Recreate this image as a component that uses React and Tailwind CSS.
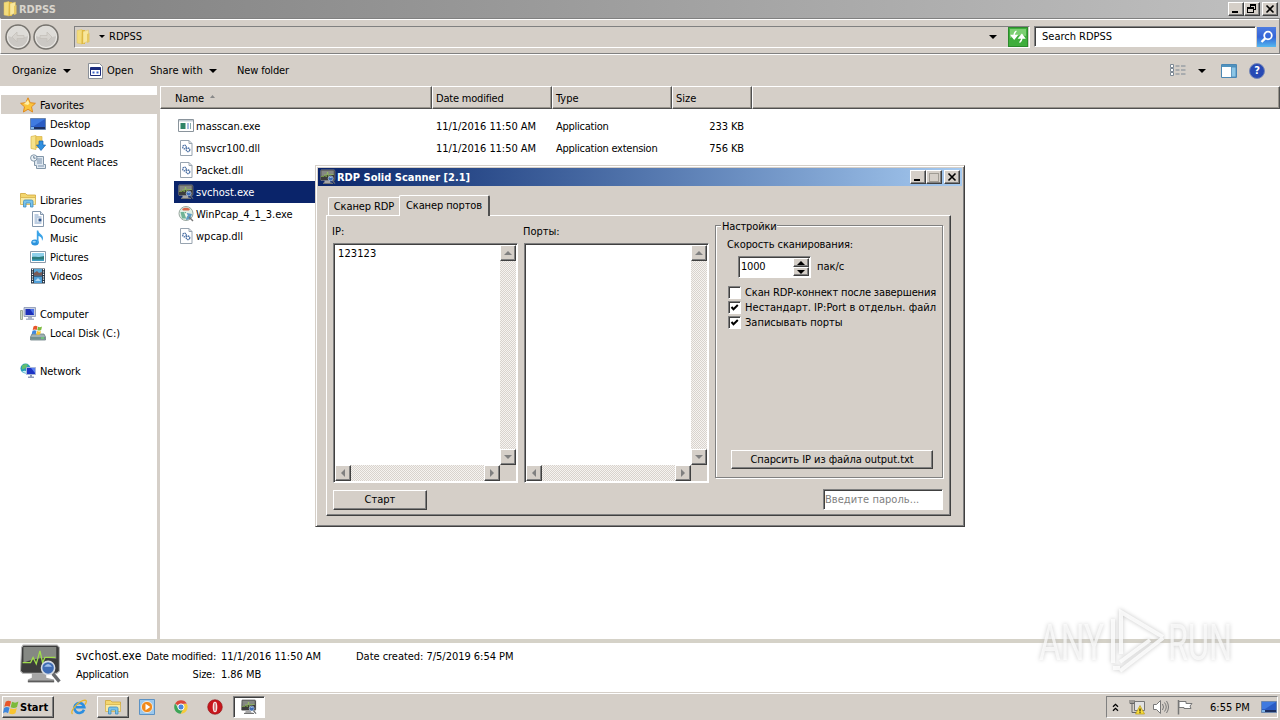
import React, { useState } from 'react';
import clsx from 'clsx';

const raised = 'bg-[#d5cfc8] border border-t-white border-l-white border-r-[#404040] border-b-[#404040] shadow-[inset_-1px_-1px_0_#808080]';
const sunken = 'border border-t-[#808080] border-l-[#808080] border-r-white border-b-white shadow-[inset_1px_1px_0_#404040]';

/* ---------- icons ---------- */

const Svg = ({ size = 16, className, children }) => (
  <svg width={size} height={size} viewBox="0 0 16 16" fill="none" className={clsx('shrink-0', className)}>
    {children}
  </svg>
);

const Caret = ({ className }) => (
  <svg width="8" height="4" viewBox="0 0 8 4" className={clsx('shrink-0', className)}>
    <path d="M0 0h8L4 4z" fill="#000" />
  </svg>
);

const FolderIcon = ({ size }) => (
  <Svg size={size}>
    <path d="M2 1.500l5-1v14.500l-5-1z" fill="#f3dc7c" stroke="#e0c25c" strokeWidth=".5" />
    <path d="M7 1h3v14H6.500z" fill="#dfb840" />
    <path d="M8 2.500l5.500-1.500v11l-5.500 2.500z" fill="#f8e79c" stroke="#dcbc54" strokeWidth=".4" />
    <path d="M12 5l2.500-1v9l-2.500 1z" fill="#e6c862" />
  </Svg>
);

const StarIcon = () => (
  <Svg>
    <path d="M8 .8l2.200 4.900 5.200.6-3.900 3.500 1.100 5.200L8 12.300 3.400 15l1.100-5.200L.6 6.300l5.200-.6z" fill="#fbc53c" stroke="#e08a1e" />
    <path d="M8 3l1.400 3.400L8 8 4 7z" fill="#fff0a8" />
  </Svg>
);

const DesktopIcon = () => (
  <Svg>
    <path d="M.5 2.500h15v11H.5z" fill="#2a5cc4" stroke="#6c87ad" />
    <path d="M1 3h14L4 10H1z" fill="#3f7ae0" />
    <path d="M1 11h14v2H1z" fill="#1c2f5f" />
    <path d="M1 11h3v2H1z" fill="#7fb4e8" />
  </Svg>
);

const DownloadsIcon = () => (
  <Svg>
    <path d="M1 1.500l5-1v14l-5-1z" fill="#f6e28a" stroke="#d8b548" strokeWidth=".7" />
    <path d="M6 1.500h6v11H6z" fill="#f0cf61" stroke="#d8b548" strokeWidth=".7" />
    <path d="M9 6h4v4h2.600L11 15.500 6.500 10H9z" fill="#2f8fe0" stroke="#1763ac" strokeWidth=".7" />
  </Svg>
);

const RecentIcon = () => (
  <Svg>
    <path d="M4.500 2.500h9v8h2v4h-9v-3h-2z" fill="#dfe8f0" stroke="#8296a8" />
    <path d="M7 5h5M7 7h5M7 9h5M8 12h6" stroke="#7089a4" strokeWidth=".9" />
    <circle cx="3.800" cy="4" r="3.200" fill="#eef4f8" stroke="#8296a8" />
    <path d="M3.800 2v2.200h1.800" stroke="#45607a" strokeWidth=".8" />
  </Svg>
);

const LibrariesIcon = () => (
  <Svg>
    <path d="M.5 3V1.500h5L7 3h8.500v4H.5z" fill="#f3d66e" stroke="#cfa63a" strokeWidth=".8" />
    <path d="M.5 5.500h15v7H.5z" fill="#f9eaa4" stroke="#d5b24b" strokeWidth=".8" />
    <path d="M3.500 15V9.500q0-1.500 1.500-1.500h6.500q1.500 0 1.500 1.500V15h-2.500v-4h-4.500v4z" fill="#79c3ea" stroke="#3f8cc0" strokeWidth=".8" />
  </Svg>
);

const DocumentIcon = () => (
  <Svg>
    <path d="M2.500.5h8l3 3v12h-11z" fill="#fff" stroke="#8497ac" />
    <path d="M10.500.5v3h3" fill="#dce6f0" stroke="#8497ac" />
    <path d="M4.500 4h4M4.500 6h7M4.500 8h3M4.500 10h3M4.500 12h7" stroke="#7b9cc4" />
    <path d="M8.500 7.500h3v3h-3z" fill="#31568c" />
  </Svg>
);

const MusicIcon = () => (
  <Svg>
    <ellipse cx="5" cy="12.500" rx="3.800" ry="2.900" fill="#2b92dc" />
    <path d="M6.800 13V.5h1.500c.6 3.500 4.700 3.800 4.700 7.500 0 1.200-.4 2-1 2.800.2-3-1.600-4.300-3.500-4.800V13z" fill="#3ba4e8" />
    <ellipse cx="4.200" cy="11.800" rx="1.700" ry="1" fill="#9cd6f8" />
  </Svg>
);

const PicturesIcon = () => (
  <Svg>
    <path d="M.5 2.500h15v11H.5z" fill="#fff" stroke="#8b9aaa" />
    <path d="M2 4h12v8H2z" fill="#8fd0ea" />
    <path d="M2 8c3-1 5 1 12-1v5H2z" fill="#2c7c7c" />
    <path d="M2 10.500h12V12H2z" fill="#3f9fc4" />
  </Svg>
);

const VideosIcon = () => (
  <Svg>
    <path d="M1 .5h14v15H1z" fill="#263646" />
    <path d="M4 1h8v6.500H4z" fill="#5aa6d6" />
    <path d="M4 8.500h8V15H4z" fill="#4f9fd8" />
    <path d="M4 5l3-2 2 2 3-1v3.500H4z" fill="#7a5a56" />
    <path d="M5 13l3-3 3 3z" fill="#b6dcf4" />
    <path d="M2.500 1v14M13.500 1v14" stroke="#fff" strokeWidth="1.200" strokeDasharray="1.200 1.200" />
  </Svg>
);

const ComputerIcon = () => (
  <Svg>
    <path d="M.5 4.500h2v9h-2z" fill="#cfd9c4" stroke="#8c9a86" strokeWidth=".8" />
    <path d="M4 1.500h11.500v9H4z" fill="#c7cfe0" stroke="#8592b0" strokeWidth=".8" />
    <path d="M5.500 3H14v6H5.500z" fill="#1c2fb8" />
    <path d="M10 3h4v6z" fill="#4a6fe8" />
    <path d="M8 11h4v1.500h2V14H6v-1.500h2z" fill="#aab4c8" />
  </Svg>
);

const WinFlag = ({ size }) => (
  <Svg size={size}>
    <path d="M2.500 2.500C4.500 1 6 1.500 7.600 2.300L6.300 7.300C4.600 6.300 3 6.300 1.200 7.400z" fill="#e8562a" />
    <path d="M8.500 2.700c2 1 4 1 6-.3L13.200 7.500c-2 1.200-4 1.100-6 .2z" fill="#7cba3c" />
    <path d="M1 8.400c2-1.200 3.500-1 5.100-.1L4.800 13.300C3.200 12.300 1.500 12.300 0 13.300z" fill="#3d86dc" />
    <path d="M7 8.700c2 1 4 1 6-.2l-1.300 5c-2 1.200-4 1.100-6 .2z" fill="#f8c431" />
  </Svg>
);

const DiskIcon = () => (
  <Svg>
    <path d="M2 9h12l1.500 3v3H.5v-3z" fill="#9fb0b4" stroke="#6b7f84" strokeWidth=".8" />
    <path d="M1 12h14v2.500H1z" fill="#73908f" />
    <path d="M11 13h3" stroke="#6ff06a" />
    <path d="M3.500 1.500q2-1.500 4 0l-.8 3.500q-2-1-4 0z" fill="#e8562a" />
    <path d="M8 1.800q2 1 4-.2L11.200 5q-2 1-4 .2z" fill="#7cba3c" />
    <path d="M2.500 5.800q2-1 4 0l-.8 3.400q-2-1-4 0z" fill="#3d86dc" />
    <path d="M7 6q2 1 4-.1l-.8 3.400q-2 1-4 .1z" fill="#f8c431" />
  </Svg>
);

const NetworkIcon = () => (
  <Svg>
    <circle cx="5.500" cy="5.500" r="5" fill="#2a9cb8" />
    <path d="M2 2.500Q5 0 8 1.500L6 5 2 6.500z" fill="#63c06c" />
    <path d="M2 9q2-2 4-1v2z" fill="#c7eef4" />
    <path d="M6.500 4.500h9v7h-9z" fill="#1d33c4" stroke="#a9b6d8" />
    <path d="M11 5h4v5z" fill="#5a80f0" />
    <path d="M10 12h2v1.500h2V15H8v-1.500h2z" fill="#8e9bb8" />
  </Svg>
);

const ExeIcon = () => (
  <Svg>
    <path d="M.5 1.500h15v12H.5z" fill="#fff" stroke="#8a949c" />
    <path d="M1 2h14v1.500H1z" fill="#c2ccd4" />
    <path d="M2.500 5h5v6h-5z" fill="#2f8468" />
    <path d="M9 6h2M9 8h2M9 10h2" stroke="#4a7ac0" />
    <path d="M12.500 5v6" stroke="#8aa" />
  </Svg>
);

const DllIcon = () => (
  <Svg>
    <path d="M2.500.5h8.500l3 3v12H2.500z" fill="#fff" stroke="#98a4b0" />
    <path d="M11 .5v3h3" stroke="#98a4b0" />
    <circle cx="6.500" cy="7" r="1.800" stroke="#4a6fa4" strokeWidth="1.300" strokeDasharray="1.400 .5" />
    <circle cx="10" cy="9.800" r="1.800" stroke="#4a6fa4" strokeWidth="1.300" strokeDasharray="1.400 .5" />
  </Svg>
);

const InstallerIcon = () => (
  <Svg>
    <circle cx="8" cy="7.500" r="7" fill="#dfeee4" stroke="#9aa8a0" />
    <path d="M4 3Q8 .5 12 3L11 4.500H5z" fill="#d8684c" />
    <path d="M2.500 6H8v6.500H4z" fill="#6fb396" />
    <path d="M9 7l5 1-2 5-4 1z" fill="#5f9cc4" />
    <path d="M6 6l4 3-2 3z" fill="#f4faf0" />
    <path d="M11 11l4 4" stroke="#777" strokeWidth="1.500" />
  </Svg>
);

const ScannerIcon = ({ size }) => (
  <Svg size={size}>
    <path d="M1.200 .8h12.900l.9.9v9l-.9.800H1l-.8-.8.4-9z" fill="#3c3c3c" stroke="#b4b4b4" strokeWidth=".4" />
    <path d="M1.300 1.500h12.500v4.500Q7 5 1.300 7.500z" fill="#858883" />
    <path d="M1 7.500h3l1-2 1.200 2.500L7.600 3l1 4.500L9.500 5.500h4" stroke="#9fdc4c" strokeWidth=".5" />
    <path d="M4.500 11.500h5.500v1.700l3 .7v1H3v-1l1.500-.7z" fill="#a6a6a6" />
    <path d="M3 14.300h10v.7H3z" fill="#5c5c5c" />
    <circle cx="10.700" cy="9.500" r="2.500" fill="#3f6cb4" stroke="#d5dbe4" strokeWidth=".6" />
    <path d="M9.200 9q1.500-2 3 0z" fill="#9fc0ec" />
    <path d="M12.500 11.700l2.500 3" stroke="#66686b" strokeWidth="1.300" />
  </Svg>
);

const OpenIcon = () => (
  <Svg>
    <path d="M.5.5h11l3 3v12h-14z" fill="#fff" stroke="#8a9098" />
    <path d="M2.500 4.500h10v8h-10z" fill="#fff" stroke="#1b2c7c" />
    <path d="M2.500 4.500h10V7h-10z" fill="#1b2c7c" />
    <path d="M4.500 8.500h2v2h-2zM8.500 8.500h2v2h-2z" fill="#3a62c8" />
  </Svg>
);

const IeIcon = () => (
  <Svg>
    <path d="M13 10.800A5 5 0 1 1 13.300 8.300H5" stroke="#2b8ee0" strokeWidth="2.600" />
    <path d="M1.500 15C-1.500 12 8 1.500 14 1.200c2.300 0 1 3 0 4.300" stroke="#e8b62c" strokeWidth="1.300" />
  </Svg>
);

const MediaIcon = () => (
  <Svg>
    <path d="M.5.5h15v15H.5z" fill="#9cc8ec" stroke="#5c92c4" />
    <circle cx="8" cy="8" r="5.600" fill="#f08a1c" stroke="#fff" strokeWidth=".7" />
    <path d="M6.500 4.800L11.300 8l-4.800 3.200z" fill="#fff" />
  </Svg>
);

const ChromeIcon = () => (
  <Svg>
    <path d="M8 8L2.100 4.600A6.800 6.800 0 0 1 13.900 4.600L8 5z" fill="#dc4638" />
    <path d="M8 5h5.900A6.800 6.800 0 0 1 7.600 14.800L10.600 9.500z" fill="#f6cb3c" />
    <path d="M2.100 4.600A6.800 6.800 0 0 0 7.600 14.800L10.200 10 5.400 9.500z" fill="#3da557" />
    <circle cx="8" cy="8" r="3.100" fill="#4a86dc" stroke="#fff" />
  </Svg>
);

const OperaIcon = () => (
  <Svg>
    <circle cx="8" cy="8" r="7.300" fill="#c8161c" stroke="#8c1014" strokeWidth=".6" />
    <ellipse cx="8" cy="8" rx="2.300" ry="5.300" fill="#f6e8e4" />
    <ellipse cx="8" cy="8" rx=".8" ry="4.300" fill="#c8686a" />
  </Svg>
);

/* ---------- window buttons ---------- */

const WinButton = ({ kind }) => (
  <div className={clsx('flex h-[14px] w-[16px] items-center justify-center', raised)}>
    <svg width="12" height="10" viewBox="0 0 12 10" fill="none" shapeRendering="crispEdges">
      {kind === 'min' && <path d="M2 8h6" stroke="#000" strokeWidth="2" />}
      {kind === 'max' && <path d="M1.500 1v8h9V1zM1 1.500h10" stroke="#a09c94" />}
      {kind === 'restore' && <path d="M4.500 3V.5h5v5H8M4 1h6M1.500 3.500h6v5h-6zM1 4h7" stroke="#000" />}
      {kind === 'close' && <path d="M2.500 1.500l7 7M9.500 1.500l-7 7" stroke="#000" strokeWidth="1.600" shapeRendering="auto" />}
    </svg>
  </div>
);

/* ---------- explorer ---------- */

const navItems = [
  { label: 'Favorites', icon: StarIcon, root: true, selected: true },
  { label: 'Desktop', icon: DesktopIcon },
  { label: 'Downloads', icon: DownloadsIcon },
  { label: 'Recent Places', icon: RecentIcon },
  null,
  { label: 'Libraries', icon: LibrariesIcon, root: true },
  { label: 'Documents', icon: DocumentIcon },
  { label: 'Music', icon: MusicIcon },
  { label: 'Pictures', icon: PicturesIcon },
  { label: 'Videos', icon: VideosIcon },
  null,
  { label: 'Computer', icon: ComputerIcon, root: true },
  { label: 'Local Disk (C:)', icon: DiskIcon },
  null,
  { label: 'Network', icon: NetworkIcon, root: true },
];

const files = [
  { name: 'masscan.exe', icon: ExeIcon, type: 'Application', size: '233 KB' },
  { name: 'msvcr100.dll', icon: DllIcon, type: 'Application extension', size: '756 KB' },
  { name: 'Packet.dll', icon: DllIcon },
  { name: 'svchost.exe', icon: ScannerIcon, selected: true },
  { name: 'WinPcap_4_1_3.exe', icon: InstallerIcon },
  { name: 'wpcap.dll', icon: DllIcon },
];

const TitleBar = () => (
  <div className="flex h-[18px] items-center bg-gradient-to-r from-[#808080] to-[#c0c0c0] pr-[2px] pl-[2px]">
    <FolderIcon />
    <span className="ml-px pt-[2px] font-bold text-[#d8d4cc]">RDPSS</span>
    <div className="ml-auto flex">
      <WinButton kind="min" />
      <WinButton kind="restore" />
      <div className="w-[2px]" />
      <WinButton kind="close" />
    </div>
  </div>
);

const NavButton = ({ flip }) => (
  <svg width="26" height="26" viewBox="0 0 26 26" fill="none" className={flip ? '-scale-x-100' : ''}>
    <circle cx="13" cy="13" r="12" fill="#cbc8c4" stroke="#77746f" strokeWidth="1.500" />
    <circle cx="13" cy="13" r="10.500" stroke="#eeece8" />
    <path d="M3 12a10 10 0 0 1 20 0q-10 4-20 0z" fill="#dedcd8" />
    <path d="M7 13l5-5v3.500h7v3h-7V18z" fill="#d6d3ce" stroke="#c4c0ba" strokeWidth=".8" />
  </svg>
);

const AddressBar = () => (
  <div className="flex h-[36px] items-center border-t border-l border-r border-b border-t-[#808080] border-l-white border-r-[#808080] border-b-[#808080] pt-px pl-1 shadow-[inset_0_1px_0_#fff]">
    <div className="flex w-[56px] gap-[2px]">
      <NavButton />
      <NavButton flip />
    </div>
    <div className="ml-[13px] flex h-[22px] w-[956px] shrink-0 items-center border border-t-[#808080] border-l-[#808080] border-r-white border-b-white">
      <FolderIcon />
      <svg width="6" height="3" viewBox="0 0 6 3" className="ml-[8px]"><path d="M0 0h6L3 3z" fill="#000" /></svg>
      <span className="ml-[4px]">RDPSS</span>
      <Caret className="mr-[32px] ml-auto" />
    </div>
    <div className="ml-[-22px] flex h-[20px] w-[20px] shrink-0 items-center justify-center border border-[#2c8a2c] bg-[#3fae3c]">
      <svg width="18" height="18" viewBox="0 0 18 18" fill="none">
        <path d="M1 1h16v7Q9 6 1 10z" fill="#7ccf72" />
        <path d="M7.500 3Q5 4 5 8M2.500 7.500L5.200 11 8 7.500zM10.500 14.500Q13 13 13 9M10 10l2.900-3.500L15.500 10z" fill="#fff" stroke="#fff" strokeWidth="1.300" />
      </svg>
    </div>
    <div className={clsx('ml-[6px] flex h-[21px] w-[222px] shrink-0 items-center bg-white pt-px pl-[7px]', sunken)}>Search RDPSS</div>
    <div className="ml-px flex h-[20px] w-[19px] shrink-0 items-center justify-center bg-gradient-to-b from-[#4d7ce0] via-[#3564d8] to-[#58b8ee]">
      <Svg>
        <circle cx="9" cy="6.500" r="3.800" stroke="#fff" strokeWidth="1.800" />
        <path d="M6.200 9.400L2.500 13" stroke="#fff" strokeWidth="2.400" />
      </Svg>
    </div>
  </div>
);

const Toolbar = () => (
  <div className="flex h-[32px] items-center border-t border-t-white pl-3">
    <span className="w-[51px]">Organize</span>
    <Caret />
    <div className="ml-[17px] flex w-[62px] items-center gap-[3px]">
      <OpenIcon />
      <span>Open</span>
    </div>
    <span className="w-[59px] whitespace-nowrap">Share with</span>
    <Caret />
    <span className="ml-[20px] tracking-[-0.15px]">New folder</span>
    <div className="mr-[15px] ml-auto flex items-center">
      <svg width="16" height="13" viewBox="0 0 16 13" fill="none">
        <path d="M.5.500h3v3h-3zM.5 4.500h3v3h-3zM.5 8.500h3v3h-3z" fill="#fff" stroke="#7c8894" />
        <path d="M5.500 2h4M11 2h4.500M5.500 6h4M11 6h4.500M5.500 10h4M11 10h4.500" stroke="#7c8894" />
      </svg>
      <Caret className="ml-[12px]" />
      <svg width="16" height="14" viewBox="0 0 16 14" fill="none" className="ml-[15px]">
        <path d="M.5.500h15v13H.5z" fill="#fff" stroke="#4a87b4" />
        <path d="M1 1h14v2H1z" fill="#4f93bf" />
        <path d="M10.500 3h4.500v10h-4.500z" fill="#8cc6e6" stroke="#4a87b4" strokeWidth=".8" />
      </svg>
      <div className="ml-[12px] flex h-[16px] w-[16px] items-center justify-center rounded-full border border-[#7688b8] bg-[#2749b4] text-[11px] font-bold text-white">?</div>
    </div>
  </div>
);

const NavPane = () => (
  <div className="w-[157px] shrink-0 bg-white pt-[9px] pl-px">
    {navItems.map((item, i) =>
      item ? (
        <div key={item.label} className={clsx('flex h-[19px] items-center gap-[4px]', item.root ? 'pl-[19px]' : 'pl-[29px]', item.selected && 'bg-[#d5cfc8]')}>
          <item.icon />
          <span className="pt-[2px] tracking-[-0.08px]">{item.label}</span>
        </div>
      ) : (
        <div key={i} className="h-[19px]" />
      )
    )}
  </div>
);

const HeaderCell = ({ className, children }) => (
  <div className={clsx('flex h-[23px] items-center border-t border-l border-r border-b border-t-white border-l-white border-r-[#505050] border-b-[#505050] pt-[2px] shadow-[inset_-1px_-1px_0_#98948c]', className)}>
    {children}
  </div>
);

const FileList = () => (
  <div className="flex min-w-0 flex-1 flex-col bg-white">
    <div className="flex bg-[#d5cfc8]">
      <HeaderCell className="w-[272px] pl-[14px]">
        Name
        <svg width="5" height="3" viewBox="0 0 5 3" className="mb-1 ml-[6px]"><path d="M0 3h5L2.500 0z" fill="#888" /></svg>
      </HeaderCell>
      <HeaderCell className="w-[120px] pl-[3px] tracking-[-0.2px]">Date modified</HeaderCell>
      <HeaderCell className="w-[120px] pl-[3px]">Type</HeaderCell>
      <HeaderCell className="w-[80px] pl-[3px]">Size</HeaderCell>
      <HeaderCell className="flex-1" />
    </div>
    <div className="pt-[6px] pl-[14px]">
      {files.map((f) => (
        <div key={f.name} className="flex h-[22px] items-center">
          <div className={clsx('flex h-[22px] w-[257px] items-center gap-[2px] pl-[4px]', f.selected && 'bg-[#0a246a] text-white')}>
            <f.icon />
            <span className="pt-[2px]">{f.name}</span>
          </div>
          <span className="w-[125px] pt-[2px] pl-[5px] tracking-[-0.05px]">{f.type && '11/1/2016 11:50 AM'}</span>
          <span className="w-[120px] pt-[2px] tracking-[-0.25px]">{f.type}</span>
          <span className="w-[68px] pt-[2px] text-right tracking-[-0.1px]">{f.size}</span>
        </div>
      ))}
    </div>
  </div>
);

const DetailsPane = () => (
  <div className="flex h-[49px] shrink-0 bg-white pl-[20px]">
    <ScannerIcon size={42} />
    <div className="ml-[14px] w-[70px] pt-[4px] leading-[18px]">
      <div className="text-[12px] tracking-[0.15px]">svchost.exe</div>
      <div className="pt-px tracking-[-0.25px]">Application</div>
    </div>
    <div className="w-[75px] pt-[5px] pr-[6px] text-right leading-[18px] tracking-[-0.25px] whitespace-nowrap">
      <div>Date modified:</div>
      <div>Size:</div>
    </div>
    <div className="w-[135px] pt-[5px] leading-[18px] tracking-[-0.05px]">
      <div>11/1/2016 11:50 AM</div>
      <div>1.86 MB</div>
    </div>
    <div className="pt-[5px] leading-[18px] tracking-[-0.03px]">Date created: 7/5/2019 6:54 PM</div>
  </div>
);

const TaskButton = ({ state, children }) => (
  <div className={clsx('flex h-[22px] w-[32px] items-center justify-center', state === 'open' && raised, state === 'active' && sunken, state === 'active' && 'bg-white')}>
    {children}
  </div>
);

const Taskbar = () => (
  <div className="flex h-[28px] shrink-0 items-center border-t border-t-[#d5cfc8] pt-px pr-[2px] pl-[2px] shadow-[inset_0_1px_0_#fff]">
    <div className={clsx('flex h-[22px] w-[52px] items-center font-bold', raised)}>
      <WinFlag size={17} />
      <span className="pt-px">Start</span>
    </div>
    <div className="ml-[9px] flex gap-[2px]">
      <TaskButton><IeIcon /></TaskButton>
      <TaskButton state="open"><LibrariesIcon /></TaskButton>
      <TaskButton><MediaIcon /></TaskButton>
      <TaskButton><ChromeIcon /></TaskButton>
      <TaskButton><OperaIcon /></TaskButton>
      <TaskButton state="active"><ScannerIcon /></TaskButton>
    </div>
    <div className="ml-auto flex h-[22px] w-[172px] items-center border border-t-[#808080] border-l-[#808080] border-r-white border-b-white pl-[5px]">
      <svg width="7" height="9" viewBox="0 0 7 9" fill="none"><path d="M1 3.800L3.500 1.300 6 3.800M1 7.800l2.500-2.500L6 7.800" stroke="#000" strokeWidth="1.300" /></svg>
      <Svg className="ml-[10px]">
        <path d="M5.500 2.500h10v9h-10z" fill="#e2e2e2" stroke="#777" />
        <path d="M1 1v3.500h4V1M3 1v3M3 4.500v9h4.500" stroke="#666" />
        <path d="M11 6.500l4.500 8.500h-9z" fill="#f8dc3a" stroke="#b89a18" strokeWidth=".7" />
        <path d="M11 9.500v3M11 13.200v1" stroke="#000" />
      </Svg>
      <Svg className="ml-[8px]">
        <path d="M.5 5.500h3l4-4v13l-4-4h-3z" fill="#fff" stroke="#777" />
        <path d="M9.500 5q2 3 0 6M11.500 3.500q3.500 4.500 0 9M13.500 2q4 6 0 12" stroke="#777" />
      </Svg>
      <Svg className="ml-[8px]">
        <path d="M1.500 1v14.500" stroke="#777" strokeWidth="1.500" />
        <path d="M2 2.500h7v2h6l-2 2.500 1 2.500H7v-1H2z" fill="#fff" stroke="#777" />
      </Svg>
      <span className="ml-[17px] w-[51px] pt-px whitespace-nowrap">6:55 PM</span>
      <DesktopIcon />
    </div>
  </div>
);

/* ---------- scanner dialog ---------- */

const arrows = {
  up: 'M0 4h8L4 0z',
  down: 'M0 0h8L4 4z',
  left: 'M4 0v8L0 4z',
  right: 'M0 0v8l4-4z',
};

const ScrollButton = ({ dir }) => (
  <div className={clsx('flex h-[16px] w-[16px] shrink-0 items-center justify-center', raised)}>
    <svg width={dir === 'up' || dir === 'down' ? 8 : 4} height={dir === 'up' || dir === 'down' ? 4 : 8}>
      <path d={arrows[dir]} fill="#808080" />
    </svg>
  </div>
);

const dither = 'bg-[repeating-conic-gradient(#f6f3f0_0_25%,#d8d3cd_0_50%)] bg-[length:2px_2px]';

const MemoBox = ({ value, onChange }) => (
  <div className={clsx('flex h-[240px] w-[185px] flex-col bg-white p-px', sunken)}>
    <div className="flex min-h-0 flex-1">
      <textarea value={value} onChange={onChange} spellCheck={false} className="min-w-0 flex-1 resize-none overflow-hidden bg-transparent pt-[2px] pl-[3px] leading-[13px] tracking-[0.1px] outline-none" />
      <div className={clsx('flex w-[16px] flex-col justify-between', dither)}>
        <ScrollButton dir="up" />
        <ScrollButton dir="down" />
      </div>
    </div>
    <div className="flex h-[16px] bg-[#d5cfc8]">
      <div className={clsx('flex flex-1 justify-between', dither)}>
        <ScrollButton dir="left" />
        <ScrollButton dir="right" />
      </div>
      <div className="w-[16px]" />
    </div>
  </div>
);

const CheckRow = ({ label, checked, className, onToggle }) => (
  <div className="flex h-[15px] items-center" onClick={onToggle}>
    <div className={clsx('mr-[4px] flex h-[13px] w-[13px] shrink-0 items-center justify-center bg-white', sunken)}>
      {checked && (
        <svg width="9" height="9" viewBox="0 0 9 9" fill="none"><path d="M1.500 4l2 2.200L7.800 2" stroke="#000" strokeWidth="2" /></svg>
      )}
    </div>
    <span className={clsx('whitespace-nowrap', className)}>{label}</span>
  </div>
);

const Spinner = () => (
  <div className={clsx('flex h-[22px] w-[73px] bg-white p-px', sunken)}>
    <span className="flex flex-1 items-center pl-px tracking-[-0.2px]">1000</span>
    <div className="flex w-[16px] flex-col">
      {['up', 'down'].map((dir) => (
        <div key={dir} className={clsx('flex h-[9px] items-center justify-center', raised)}>
          <svg width="8" height="4"><path d={arrows[dir]} fill="#000" /></svg>
        </div>
      ))}
    </div>
  </div>
);

const Settings = () => {
  const [opts, setOpts] = useState([
    { label: 'Скан RDP-коннект после завершения', checked: false, className: 'tracking-[-0.13px]' },
    { label: 'Нестандарт. IP:Port в отдельн. файл', checked: true, className: 'tracking-[0.05px]' },
    { label: 'Записывать порты', checked: true },
  ]);
  const toggle = (i) => setOpts(opts.map((o, n) => (n === i ? { ...o, checked: !o.checked } : o)));

  return (
    <div className="flex h-[253px] w-[228px] flex-col border border-[#808080] pl-[11px] shadow-[1px_1px_0_#fff,inset_1px_1px_0_#fff]">
      <span className="mt-[-6px] ml-[-6px] w-[56px] bg-[#d5cfc8] pl-px leading-[14px] tracking-[-0.15px]">Настройки</span>
      <span className="mt-[4px] leading-[14px] tracking-[-0.1px]">Скорость сканирования:</span>
      <div className="mt-[4px] ml-[11px] flex items-center gap-[6px]">
        <Spinner />
        <span>пак/с</span>
      </div>
      <div className="mt-[7px] ml-px">
        {opts.map((o, i) => (
          <CheckRow key={o.label} {...o} onToggle={() => toggle(i)} />
        ))}
      </div>
      <button className={clsx('mt-auto mb-[8px] ml-[4px] h-[19px] w-[202px] tracking-[-0.06px] whitespace-nowrap', raised)}>Спарсить IP из файла output.txt</button>
    </div>
  );
};

const ScannerDialog = () => {
  const [ips, setIps] = useState('123123');
  const [ports, setPorts] = useState('');

  return (
    <div className="absolute top-[165px] left-[315px] h-[362px] w-[650px] border border-t-[#d5cfc8] border-l-[#d5cfc8] border-r-[#404040] border-b-[#404040] bg-[#d5cfc8] p-[2px] shadow-[inset_1px_1px_0_#fff,inset_-1px_-1px_0_#808080]">
      <div className="flex h-[18px] items-center bg-gradient-to-r from-[#0a246a] to-[#a6caf0] pr-[2px] pl-[2px]">
        <ScannerIcon />
        <span className="ml-px pt-[2px] font-bold text-white">RDP Solid Scanner [2.1]</span>
        <div className="ml-auto flex">
          <WinButton kind="min" />
          <WinButton kind="max" />
          <div className="w-[2px]" />
          <WinButton kind="close" />
        </div>
      </div>

      <div className="mt-[9px] flex h-[20px] items-end pl-[10px]">
        <div className="flex h-[18px] w-[71px] items-center justify-center rounded-tl-[2px] border-t border-l border-t-white border-l-white pt-px tracking-[-0.1px] whitespace-nowrap">Сканер RDP</div>
        <div className="z-10 mb-[-1px] flex h-[21px] w-[91px] items-center justify-center rounded-t-[2px] border-t border-r-2 border-l border-t-white border-r-[#505050] border-l-white bg-[#d5cfc8] tracking-[-0.1px] whitespace-nowrap">Сканер портов</div>
      </div>

      <div className="ml-[8px] h-[301px] w-[625px] border border-t-white border-l-white border-r-[#404040] border-b-[#404040] pt-[9px] pl-[6px] shadow-[inset_-1px_-1px_0_#808080]">
        <div className="flex">
          <div className="w-[191px]">
            <div className="ml-[-1px] flex h-[18px] items-start leading-[13px]">IP:</div>
            <MemoBox value={ips} onChange={(e) => setIps(e.target.value)} />
          </div>
          <div className="w-[191px]">
            <div className="ml-[-1px] flex h-[18px] items-start leading-[13px]">Порты:</div>
            <MemoBox value={ports} onChange={(e) => setPorts(e.target.value)} />
          </div>
          <Settings />
        </div>
        <div className="mt-[6px] flex items-center justify-between pr-[7px]">
          <button className={clsx('h-[20px] w-[94px]', raised)}>Старт</button>
          <input placeholder="Введите пароль..." className={clsx('h-[21px] w-[120px] bg-white pb-px pl-px tracking-[0.05px] outline-none placeholder:text-[#808080]', sunken)} />
        </div>
      </div>
    </div>
  );
};

const Watermark = () => (
  <svg width="220" height="80" viewBox="0 0 220 80" fill="none" className="pointer-events-none absolute top-[602px] left-[1034px] drop-shadow-[0_0_2px_#b8b8b8]">
    <g fill="#ffffff" fillOpacity=".7" fontFamily="Roboto, sans-serif" fontSize="50">
      <text x="5" y="58" textLength="65" lengthAdjust="spacingAndGlyphs">ANY</text>
      <text x="134" y="58" textLength="64" lengthAdjust="spacingAndGlyphs">RUN</text>
    </g>
    <path d="M79 17v44M87 52V10l42 25M129 36L86 69M86 60l30-22M79 66h7" stroke="#ffffff" strokeOpacity=".8" strokeWidth="4" />
  </svg>
);

const App = () => (
  <div className="relative flex h-[720px] w-[1280px] flex-col overflow-hidden bg-[#d5cfc8] font-['DejaVu_Sans_Condensed','DejaVu_Sans',sans-serif] text-[11px] leading-[14px] text-black">
    <TitleBar />
    <AddressBar />
    <Toolbar />
    <div className="flex min-h-0 flex-1">
      <NavPane />
      <div className="w-[3px] shrink-0 bg-[#d5cfc8]" />
      <FileList />
    </div>
    <div className="h-[4px] shrink-0 bg-[#d5d2c8]" />
    <DetailsPane />
    <Taskbar />
    <ScannerDialog />
    <Watermark />
  </div>
);

export default App;
